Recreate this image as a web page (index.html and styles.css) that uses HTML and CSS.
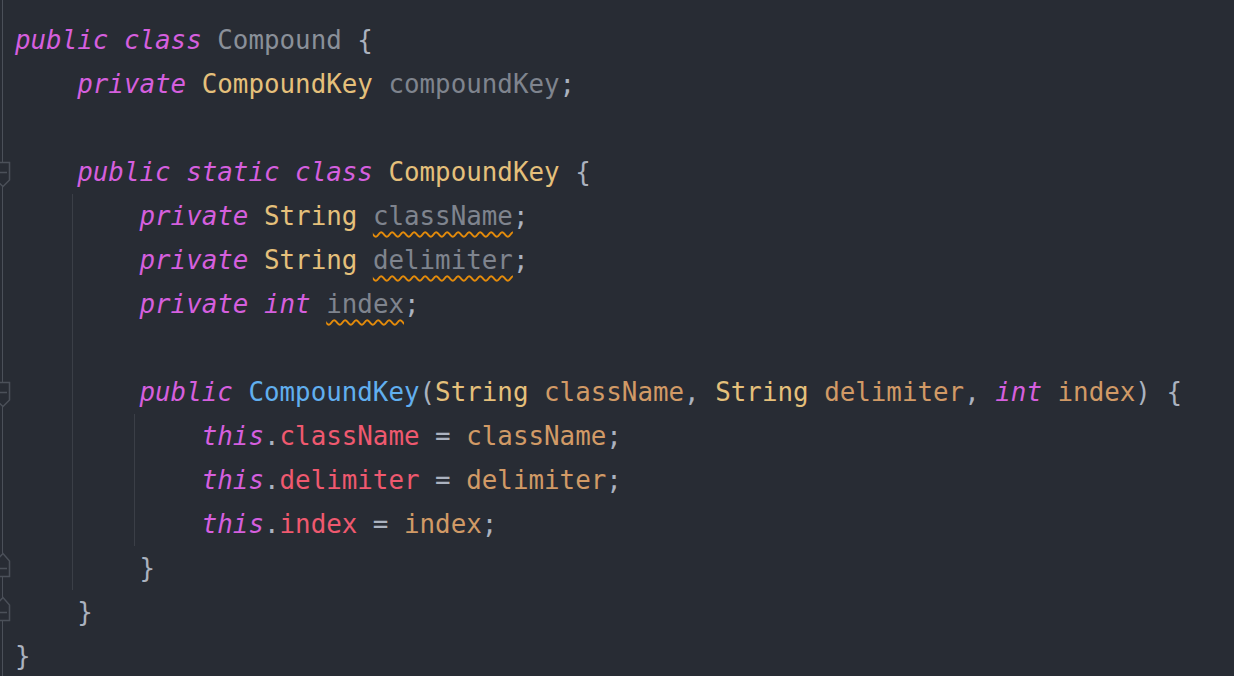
FILE: index.html
```html
<!DOCTYPE html>
<html>
<head>
<meta charset="utf-8">
<link rel="stylesheet" href="styles.css">
</head>
<body>
<div class="editor">
  <div class="line"><span class="gut"></span><span class="code"><span class="kw">public</span> <span class="kw">class</span> <span class="cls">Compound</span> {</span></div>
  <div class="line"><span class="gut"></span><span class="code"><span class="ind"></span><span class="kw">private</span> <span class="ty">CompoundKey</span> <span class="fld">compoundKey</span>;</span></div>
  <div class="line"><span class="gut"></span><span class="code"></span></div>
  <div class="line"><span class="gut"><svg class="fold" width="15" height="44" viewBox="0 0 15 44"><path d="M-4 12.5H9.5V30L3 36.5L-4 30Z M-1 22.5H7"/></svg></span><span class="code"><span class="ind"></span><span class="kw">public</span> <span class="kw">static</span> <span class="kw">class</span> <span class="ty">CompoundKey</span> {</span></div>
  <div class="line"><span class="gut"></span><span class="code"><span class="ind"></span><span class="ind g"></span><span class="kw">private</span> <span class="ty">String</span> <span class="fld warn">className</span>;</span></div>
  <div class="line"><span class="gut"></span><span class="code"><span class="ind"></span><span class="ind g"></span><span class="kw">private</span> <span class="ty">String</span> <span class="fld warn">delimiter</span>;</span></div>
  <div class="line"><span class="gut"></span><span class="code"><span class="ind"></span><span class="ind g"></span><span class="kw">private</span> <span class="kw">int</span> <span class="fld warn">index</span>;</span></div>
  <div class="line"><span class="gut"></span><span class="code"><span class="ind"></span><span class="ind g"></span></span></div>
  <div class="line"><span class="gut"><svg class="fold" width="15" height="44" viewBox="0 0 15 44"><path d="M-4 12.5H9.5V30L3 36.5L-4 30Z M-1 22.5H7"/></svg></span><span class="code"><span class="ind"></span><span class="ind g"></span><span class="kw">public</span> <span class="fn">CompoundKey</span>(<span class="ty">String</span> <span class="prm">className</span>, <span class="ty">String</span> <span class="prm">delimiter</span>, <span class="kw">int</span> <span class="prm">index</span>) {</span></div>
  <div class="line"><span class="gut"></span><span class="code"><span class="ind"></span><span class="ind g"></span><span class="ind g"></span><span class="kw">this</span>.<span class="mem">className</span> = <span class="prm">className</span>;</span></div>
  <div class="line"><span class="gut"></span><span class="code"><span class="ind"></span><span class="ind g"></span><span class="ind g"></span><span class="kw">this</span>.<span class="mem">delimiter</span> = <span class="prm">delimiter</span>;</span></div>
  <div class="line"><span class="gut"></span><span class="code"><span class="ind"></span><span class="ind g"></span><span class="ind g"></span><span class="kw">this</span>.<span class="mem">index</span> = <span class="prm">index</span>;</span></div>
  <div class="line"><span class="gut"><svg class="fold" width="15" height="44" viewBox="0 0 15 44"><path d="M-4 30.5H9.5V15L3 7.5L-4 15Z M-1 22.5H7"/></svg></span><span class="code"><span class="ind"></span><span class="ind g"></span>}</span></div>
  <div class="line"><span class="gut"><svg class="fold" width="15" height="44" viewBox="0 0 15 44"><path d="M-4 30.5H9.5V15L3 7.5L-4 15Z M-1 22.5H7"/></svg></span><span class="code"><span class="ind"></span>}</span></div>
  <div class="line"><span class="gut"></span><span class="code">}</span></div>
</div>
</body>
</html>
```

FILE: styles.css
```css
html, body {
  margin: 0;
  padding: 0;
  background: #282c34;
  height: 100%;
  overflow: hidden;
}

.editor {
  padding-top: 18px;
  font-family: "DejaVu Sans Mono", "Liberation Mono", monospace;
  font-size: 25.85px;
  line-height: 44px;
  color: #abb2bf;
  background: linear-gradient(#4b5059, #4b5059) 2px 0 / 1px 100% no-repeat;
  min-height: 100%;
}

.line {
  display: flex;
  height: 44px;
  white-space: pre;
}

.gut {
  flex: 0 0 15px;
  width: 15px;
  height: 44px;
}

.fold {
  display: block;
  overflow: visible;
}

.fold path {
  fill: #282c34;
  stroke: #4b5059;
  stroke-width: 1.5;
}

.code {
  display: block;
  height: 44px;
}

.ind {
  display: inline-block;
  width: 4ch;
  height: 44px;
  vertical-align: top;
}

.ind.g {
  margin-left: -5px;
  width: calc(4ch + 4px);
  border-left: 1px solid #3b3f47;
}

.kw {
  color: #d55fde;
  font-style: italic;
}

.cls {
  color: #8a9099;
}

.ty {
  color: #e5c07b;
}

.fld {
  color: #7f848e;
}

.warn {
  text-decoration: underline wavy #e48b0a;
  text-decoration-thickness: 1.5px;
  text-underline-offset: 6px;
}

.fn {
  color: #61afef;
}

.prm {
  color: #d19a66;
}

.mem {
  color: #ef596f;
}
```
